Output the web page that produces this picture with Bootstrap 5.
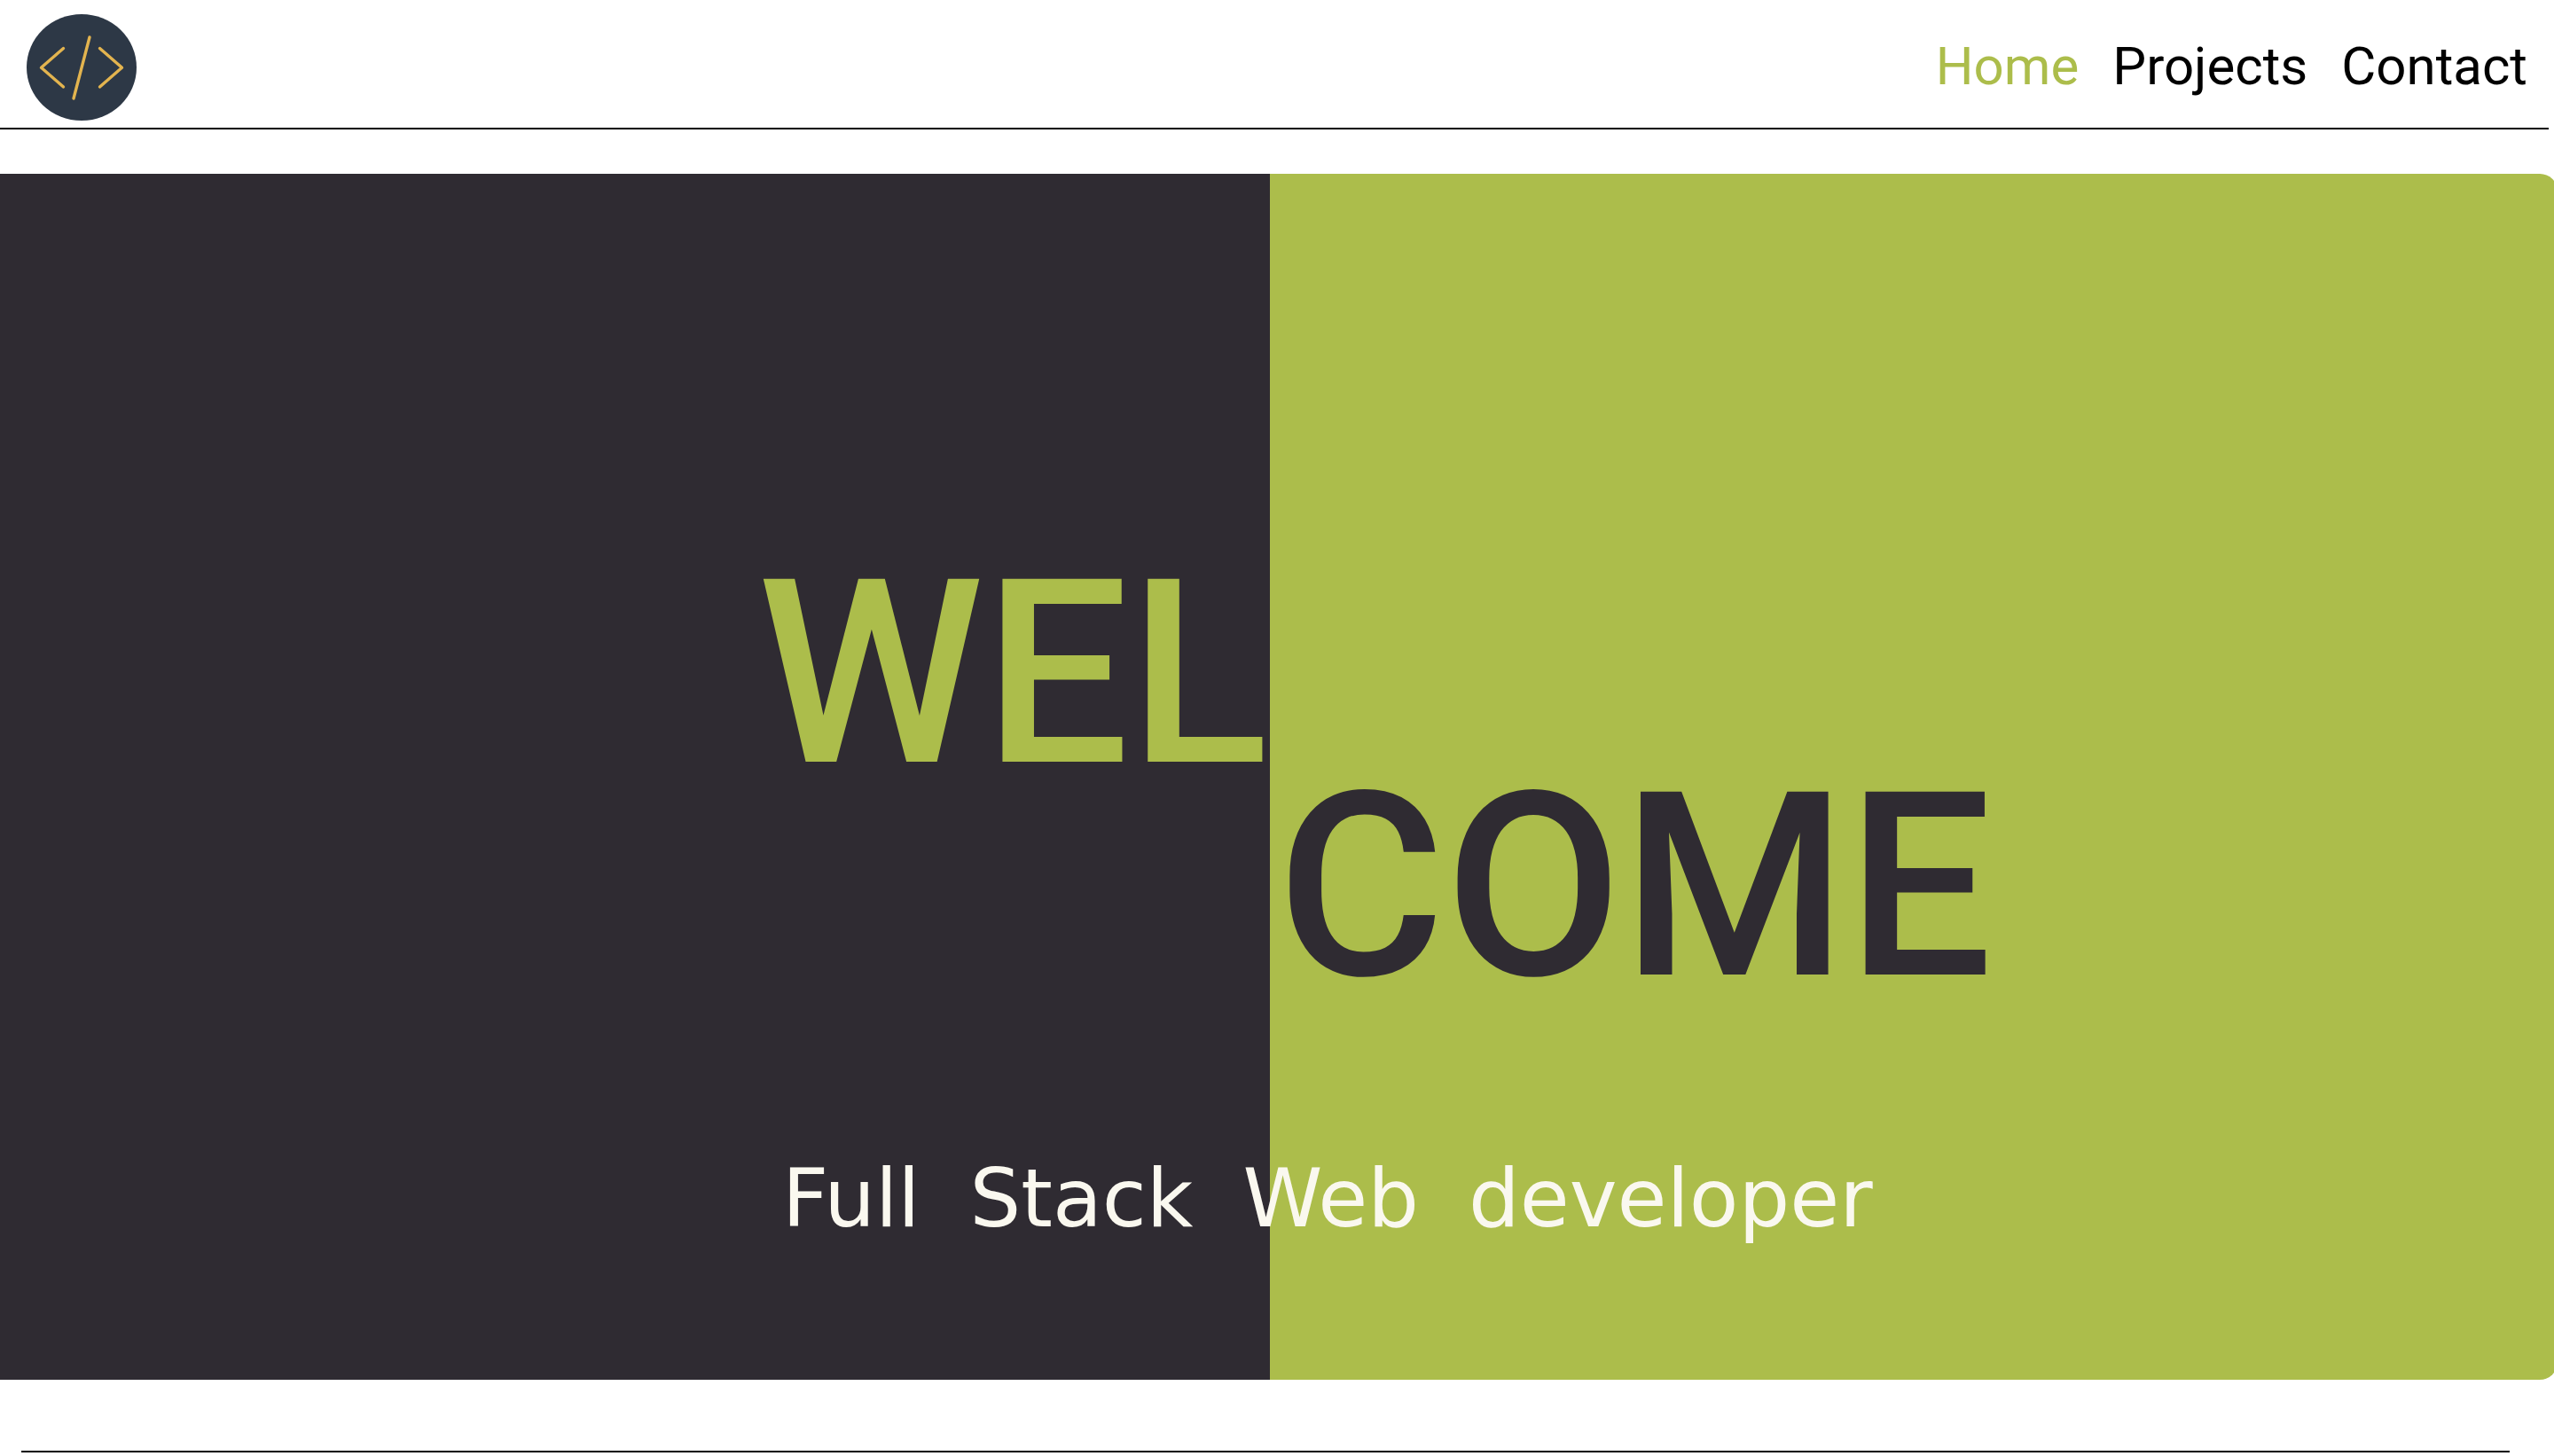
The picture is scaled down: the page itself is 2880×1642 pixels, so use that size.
<!DOCTYPE html>
<html lang="en">
<head>
<meta charset="utf-8">
<meta name="viewport" content="width=device-width, initial-scale=1">
<title>Full Stack Web developer</title>
<link href="https://cdn.jsdelivr.net/npm/bootstrap@5.3.0/dist/css/bootstrap.min.css" rel="stylesheet">
<style>
  :root { --ink: #2f2b32; --lime: #acbd4b; --cream: #faf8ef; }
  body { font-family: Roboto, sans-serif; background: #fff; overflow-x: hidden; }
  .site-header { margin-right: 6px; padding: 16px 24px 8px 30px; border-bottom: 2px solid #000; }
  .site-header .navbar-brand { margin: 0; padding: 0; }
  .site-nav { gap: 38px; padding-bottom: 2px; }
  .site-nav .nav-link { padding: 0; font-size: 60px; line-height: 72px; color: #000; }
  .site-nav .nav-link.active { color: var(--lime); }
  .hero { display: grid; grid-template-columns: calc(50% - 8px) calc(50% + 12px); min-height: 1360px; margin-top: 50px; overflow: hidden; }
  .hero-title { display: contents; font-size: 290px; line-height: 240px; font-weight: 500; }
  .half { grid-row: 1; }
  .half-dark { grid-column: 1; padding: 444px 2px 0 0; background: var(--ink); color: var(--lime); }
  .half-lime { grid-column: 2; padding: 684px 0 0 8px; background: var(--lime); color: var(--ink); border-radius: 0 20px 20px 0; }
  .tagline { grid-row: 1; grid-column: 1 / -1; gap: 56px; padding: 0 0 150px 882px; font-family: "DejaVu Sans", sans-serif; font-size: 91px; line-height: 108px; color: var(--cream); }
  .section-rule { margin: 80px 50px 4px 24px; border-top: 2px solid #000; opacity: 1; }
</style>
</head>
<body>
<header class="site-header navbar d-flex align-items-center justify-content-between">
  <a class="navbar-brand" href="#" aria-label="Home page">
    <svg class="d-block" width="124" height="120" viewBox="0 0 124 120" aria-hidden="true">
      <ellipse cx="62" cy="60" rx="62" ry="60" fill="#2d3846"/>
      <path d="M41.500 38.500L16.500 60.300L41.500 82M71 26L53 95M82.500 38.500L107.500 60.300L82.500 82" fill="none" stroke="#e3b44f" stroke-width="3.400" stroke-linecap="round" stroke-linejoin="round"/>
    </svg>
  </a>
  <nav class="site-nav nav" aria-label="Main">
    <a class="nav-link active" aria-current="page" href="#">Home</a>
    <a class="nav-link" href="#projects">Projects</a>
    <a class="nav-link" href="#contact">Contact</a>
  </nav>
</header>
<main>
  <section class="hero">
    <h1 class="hero-title">
      <span class="half half-dark text-end">WEL</span>
      <span class="half half-lime">COME</span>
    </h1>
    <p class="tagline d-flex align-self-end mb-0">
      <span>Full</span> <span>Stack</span> <span>Web</span> <span>developer</span>
    </p>
  </section>
  <hr class="section-rule">
</main>
<script src="https://cdn.jsdelivr.net/npm/bootstrap@5.3.0/dist/js/bootstrap.bundle.min.js"></script>
</body>
</html>
